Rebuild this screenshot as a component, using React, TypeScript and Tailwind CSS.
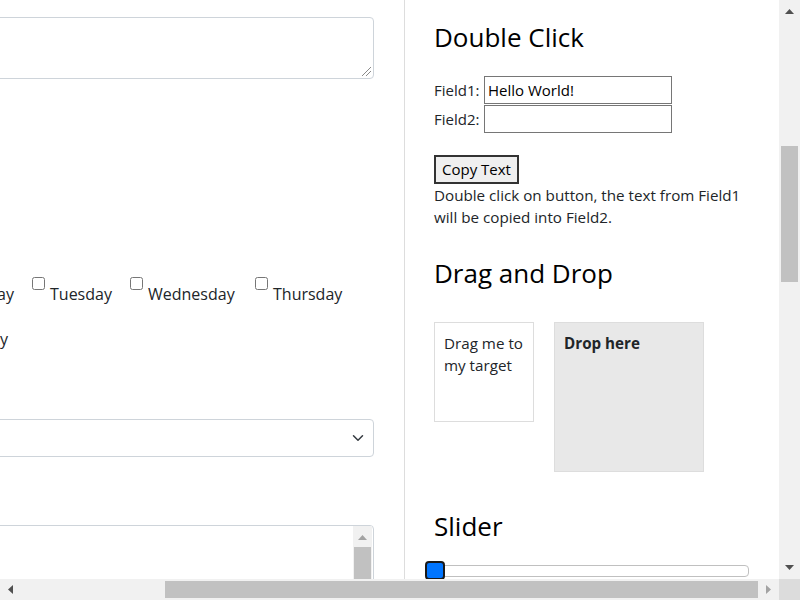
import React from 'react';

const font = 'font-["Open_Sans","Noto_Sans",sans-serif]';

function Tri({ dir, color = '#505050' }: { dir: 'up' | 'down' | 'left' | 'right'; color?: string }) {
    const pts = {
        up: '0,5 4.5,0 9,5',
        down: '0,0 9,0 4.5,5',
        left: '5,0 5,9 0,4.5',
        right: '0,0 5,4.5 0,9',
    }[dir];
    const vert = dir === 'up' || dir === 'down';
    return (
        <svg width={vert ? 9 : 5} height={vert ? 5 : 9} viewBox={vert ? '0 0 9 5' : '0 0 5 9'}>
            <polygon points={pts} fill={color} />
        </svg>
    );
}

function DayCheck({ label, width }: { label: string; width?: string }) {
    return (
        <div className={`flex items-start shrink-0 ${width ?? ''}`}>
            <input type="checkbox" className="w-[13px] h-[13px] m-0 shrink-0" />
            <span className="ml-[5px] mt-[5px] leading-[24px] text-[16px] text-[#212529] whitespace-nowrap">{label}</span>
        </div>
    );
}

function LeftColumn() {
    return (
        <div className="w-[405px] shrink-0 border-r border-[#dddddd] overflow-hidden">
            <div className="pr-[30px] -ml-[300px]">
                {/* comments textarea */}
                <div className="relative mt-[17px] h-[62px] border border-[#ced4da] rounded-[4px]">
                    <svg className="absolute right-[1px] bottom-[1px]" width="11" height="11" viewBox="0 0 11 11">
                        <line x1="10" y1="1" x2="1" y2="10" stroke="#8a8a8a" strokeWidth="1" />
                        <line x1="10" y1="5" x2="5" y2="10" stroke="#8a8a8a" strokeWidth="1" />
                    </svg>
                </div>

                {/* weekdays */}
                <div className="mt-[198px] flex items-start">
                    <div className="flex justify-end w-[314px] shrink-0">
                        <span className="mt-[5px] leading-[24px] text-[16px] text-[#212529] whitespace-nowrap">Monday</span>
                    </div>
                    <div className="w-[18px] shrink-0" />
                    <DayCheck label="Tuesday" width="w-[98px]" />
                    <DayCheck label="Wednesday" width="w-[125px]" />
                    <DayCheck label="Thursday" />
                </div>
                <div className="mt-[16px] flex items-start">
                    <div className="flex justify-end w-[308px] shrink-0">
                        <span className="mt-[5px] leading-[24px] text-[16px] text-[#212529] whitespace-nowrap">Sunday</span>
                    </div>
                </div>

                {/* select */}
                <div className="relative mt-[68px] h-[38px] border border-[#ced4da] rounded-[4px] bg-white">
                    <svg className="absolute right-[7px] top-[12px]" width="16" height="12" viewBox="0 0 16 16">
                        <path d="m2 5 6 6 6-6" fill="none" stroke="#343a40" strokeWidth="2" strokeLinecap="round" strokeLinejoin="round" />
                    </svg>
                </div>

                {/* multi-select list */}
                <div className="mt-[68px] h-[120px] border border-[#ced4da] rounded-[4px] flex justify-end">
                    <div className="w-[19px] mr-[1px] bg-[#f1f1f1] flex flex-col items-center">
                        <div className="mt-[9px] h-[5px] flex"><Tri dir="up" color="#a3a3a3" /></div>
                        <div className="mt-[7px] w-[17px] h-[80px] bg-[#c1c1c1]" />
                    </div>
                </div>
            </div>
        </div>
    );
}

function RightColumn() {
    return (
        <div className="flex-1 pl-[29px] text-[#212529]">
            <h3 className="mt-[21px] text-[26px] leading-[32px] text-black">Double Click</h3>
            <div className="mt-[23px] flex items-center h-[28px]">
                <span className="w-[50px] text-[15px]">Field1:</span>
                <input
                    type="text"
                    defaultValue="Hello World!"
                    className="w-[188px] h-[28px] border border-[#767676] px-[3px] text-[15px] text-black outline-none"
                />
            </div>
            <div className="mt-[1px] flex items-center h-[28px]">
                <span className="w-[50px] text-[15px]">Field2:</span>
                <input type="text" className="w-[188px] h-[28px] border border-[#767676] px-[3px] text-[15px] outline-none" />
            </div>
            <button className="mt-[22px] w-[85px] h-[29px] border-2 border-[#333] bg-[#efefef] text-[15px] text-black leading-none">
                Copy Text
            </button>
            <p className="text-[15.2px] leading-[22px]">
                Double click on button, the text from Field1
                <br />
                will be copied into Field2.
            </p>

            <h3 className="mt-[29px] text-[26px] leading-[32px] text-black">Drag and Drop</h3>
            <div className="mt-[33px] flex items-start gap-[20px]">
                <div className="w-[100px] h-[100px] border border-[#dddddd] p-[9px] text-[15.2px] leading-[22px]">
                    Drag me to my target
                </div>
                <div className="w-[150px] h-[150px] border border-[#dddddd] bg-[#e8e8e8] p-[9px] text-[15.2px] leading-[22px] font-bold">
                    Drop here
                </div>
            </div>

            <h3 className="mt-[38px] text-[26px] leading-[32px] text-black">Slider</h3>
            <div className="relative mt-[19px] h-[18px] w-[324px] -ml-[9px]">
                <div className="absolute left-[10px] right-0 top-[4px] h-[12px] border border-[#c0c0c0] rounded-[4px] bg-white" />
                <div className="absolute left-0 top-0 w-[20px] h-[19px] rounded-[4px] border-2 border-[#1a1a1a] bg-[#0075ff]" />
            </div>
        </div>
    );
}

export default function App() {
    return (
        <div className={`w-[800px] h-[600px] flex flex-col overflow-hidden bg-white ${font}`}>
            <div className="flex h-[579px]">
                <div className="w-[779px] h-[579px] flex overflow-hidden">
                    <LeftColumn />
                    <RightColumn />
                </div>
                {/* vertical scrollbar */}
                <div className="w-[21px] bg-[#f1f1f1] flex flex-col items-center">
                    <div className="mt-[9px] h-[5px] flex"><Tri dir="up" /></div>
                    <div className="mt-[132px] w-[17px] h-[136px] bg-[#c1c1c1]" />
                    <div className="mt-[283px] h-[5px] flex"><Tri dir="down" /></div>
                </div>
            </div>
            {/* horizontal scrollbar */}
            <div className="flex h-[21px]">
                <div className="w-[779px] bg-[#f1f1f1] flex items-center">
                    <div className="ml-[8px] flex"><Tri dir="left" /></div>
                    <div className="ml-[152px] w-[593px] h-[17px] bg-[#c1c1c1]" />
                    <div className="ml-[8px] flex"><Tri dir="right" color="#a3a3a3" /></div>
                </div>
                <div className="w-[21px] bg-[#dcdcdc]" />
            </div>
        </div>
    );
}
